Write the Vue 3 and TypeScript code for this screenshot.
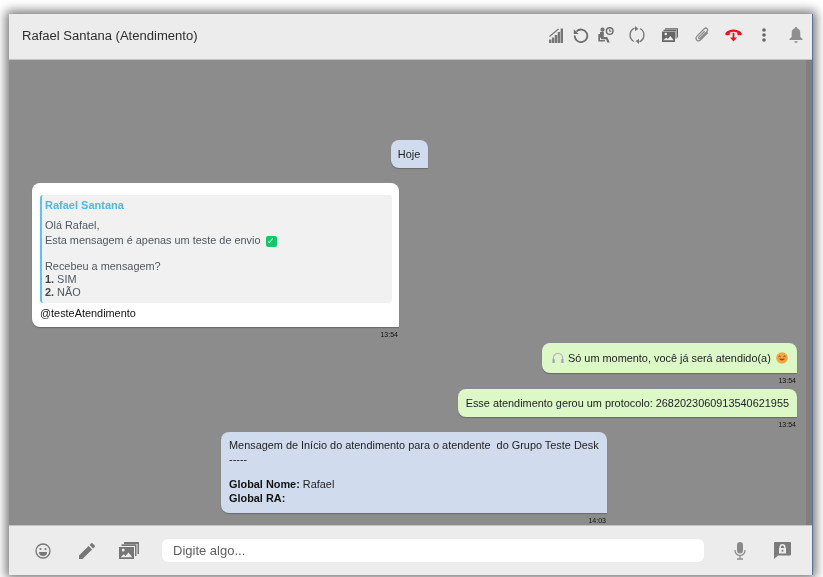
<script setup lang="ts">
const title = 'Rafael Santana (Atendimento)'
</script>

<template>
  <div class="page">
    <div class="chat-window">
      <header class="chat-header">
        <span class="chat-title">{{ title }}</span>
        <div class="header-icons">
          <svg class="ic" style="width:14px" viewBox="0 0 14 16"><path d="M0 12.500h2.400V16H0zM2.900 10.500h2.400V16H2.900zM5.800 8h2.400v8H5.800zM8.700 5h2.400v11H8.700zM11.600 1.500H14V16h-2.400z" fill="#777"/><path d="M0.500 9.500 9.500 2" stroke="#777" stroke-width="1.200" fill="none"/></svg>
          <svg class="ic ic-reload" viewBox="0 0 16 16"><path d="M3.400 4.500A6.300 6.300 0 1 1 1.700 8.500" fill="none" stroke="#6d6d6d" stroke-width="1.800"/><path d="M0.800 2.200v4.800h4.800z" fill="#6d6d6d"/></svg>
          <svg class="ic ic-wait" viewBox="0 0 16 16"><circle cx="4.500" cy="2.700" r="2.100" fill="#707070"/><path d="M2 5h3.800v5H9.200l2.600 5.500H9.300L8 12.300H3.500L2 10z M0.300 7v7.500h6.500v-1.500H2V7z" fill="#707070"/><circle cx="11.700" cy="4" r="3.300" fill="none" stroke="#707070" stroke-width="1.500"/><path d="M11.700 2.300V4.200h1.700" fill="none" stroke="#707070" stroke-width="1.100"/></svg>
          <svg class="ic ic-sync" viewBox="0 0 18 18"><path d="M6.500 2.200A7.500 7.500 0 0 0 5.800 15.500M11.500 15.800A7.500 7.500 0 0 0 12.200 2.500" fill="none" stroke="#777" stroke-width="1.400"/><path d="M7 0 10.500 3 7 5zM11 18 7.500 15l3.500-2z" fill="#777"/></svg>
          <svg class="ic ic-gallery" viewBox="0 0 16 15"><path d="M3 2V0.800h13V10h-1V2z" fill="#666"/><path d="M1.500 3.500V2.300h13v9h-1v-7.800z" fill="#666"/><path d="M0 4h13v10.500H0zM1.300 12.800h10.400L8.300 8.500l-2.500 3-1.500-1.500zM3.800 7.800a1.300 1.300 0 1 0 0-2.600 1.300 1.300 0 0 0 0 2.600z" fill="#666" fill-rule="evenodd"/></svg>
          <svg class="ic ic-clip" viewBox="0 0 16 16"><path d="M13.800 5.500 6.600 12.700c-1.200 1.200-2.900 1.300-3.900.3-1-1-.9-2.700.3-3.900l7.300-7.300c.8-.8 2-.9 2.800-.1.800.8.700 2-.1 2.800l-6.700 6.700c-.4.400-1 .5-1.400.1-.4-.4-.3-1 .1-1.400l5.700-5.700" fill="none" stroke="#8a8a8a" stroke-width="1.300"/></svg>
          <svg class="ic ic-hangup" viewBox="0 0 17 16"><path d="M0.300 6.200C2.200 3.700 5 2.500 8.500 2.500s6.300 1.200 8.200 3.700l-.4 2h-3.700l-.5-2.700c-1.200-.5-2.400-.7-3.600-.7s-2.400.2-3.600.7L4.400 8.200H.7z" fill="#f0101c"/><path d="M8.500 5.800v6" stroke="#f0101c" stroke-width="1.800"/><path d="M5 10.500h7L8.500 14.500z" fill="#f0101c"/></svg>
          <svg class="ic ic-dots" viewBox="0 0 4 14"><circle cx="2" cy="2" r="1.800" fill="#666"/><circle cx="2" cy="7" r="1.800" fill="#666"/><circle cx="2" cy="12" r="1.800" fill="#666"/></svg>
          <svg class="ic ic-bell" viewBox="0 0 14 16"><path d="M7 0c.8 0 1.200.6 1.200 1.300 2 .6 3.100 2.300 3.100 4.600v4l2.200 2.100v1H.500v-1l2.200-2.100v-4c0-2.300 1.100-4 3.100-4.600C5.800.6 6.200 0 7 0zM5.300 14.200h3.400c0 .9-.8 1.700-1.700 1.700s-1.700-.8-1.700-1.700z" fill="#8f8f8f"/></svg>
        </div>
      </header>

      <main class="chat-body">
        <div class="scroll-track"></div>
        <div class="day-row"><div class="bubble day">Hoje</div></div>

        <div class="msg left">
          <div class="bubble white">
            <div class="quote">
              <div class="quote-name">Rafael Santana</div>
              <div class="quote-text">
                <p>Olá Rafael,</p>
                <p>Esta mensagem é apenas um teste de envio <span class="check">✓</span></p>
                <p class="gap">Recebeu a mensagem?</p>
                <p><b>1.</b> SIM</p>
                <p><b>2.</b> NÃO</p>
              </div>
            </div>
            <div class="mention">@testeAtendimento</div>
          </div>
          <div class="time">13:54</div>
        </div>

        <div class="msg right">
          <div class="bubble green first">
            <svg class="phones" viewBox="0 0 13 13"><path d="M1.500 9V6.500a5 5 0 0 1 10 0V9" fill="none" stroke="#b9b2c4" stroke-width="1.300"/><rect x="0.500" y="7.500" width="2.500" height="4.500" rx="1" fill="#a79fb8"/><rect x="10" y="7.500" width="2.500" height="4.500" rx="1" fill="#a79fb8"/></svg>
            <span>Só um momento, você já será atendido(a)</span>
            <svg class="smile" viewBox="0 0 12 12"><circle cx="6" cy="6" r="5.800" fill="#f5a53a"/><path d="M2.500 4.800q1-1.500 2 0M7.500 4.800q1-1.500 2 0" fill="none" stroke="#7a3b10" stroke-width="1"/><path d="M2.800 6.800q3.200 3.600 6.400 0z" fill="#a8391f"/></svg>
          </div>
          <div class="time">13:54</div>
        </div>

        <div class="msg right">
          <div class="bubble green">Esse atendimento gerou um protocolo: 2682023060913540621955</div>
          <div class="time">13:54</div>
        </div>

        <div class="msg center">
          <div class="bubble blue">
            <p>Mensagem de Início do atendimento para o atendente&nbsp; do Grupo Teste Desk</p>
            <p>-----</p>
            <p class="gap"><b>Global Nome:</b> Rafael</p>
            <p><b>Global RA:</b></p>
          </div>
          <div class="time">14:03</div>
        </div>
      </main>

      <footer class="chat-footer">
        <svg class="f-ic f-smile" viewBox="0 0 16 16"><circle cx="8" cy="8" r="7" fill="none" stroke="#777" stroke-width="1.300"/><circle cx="5.500" cy="6" r="1.100" fill="#777"/><circle cx="10.500" cy="6" r="1.100" fill="#777"/><path d="M4 9h8a4 4 0 0 1-8 0z" fill="#777"/></svg>
        <svg class="f-ic f-pen" viewBox="0 0 16 16"><path d="M0 16v-3.500L9.600 2.900l3.500 3.500L3.500 16zM10.600 1.900 12.300.2c.3-.3.800-.3 1.100 0l2.400 2.400c.3.300.3.800 0 1.100l-1.700 1.700z" fill="#777"/></svg>
        <svg class="f-ic f-gallery" viewBox="0 0 20 17"><path d="M5 2V0h15v12h-1.500V2z" fill="#767676"/><path d="M2.500 4V2.200h15V14H16V4z" fill="#767676"/><path d="M0 5h15v12H0zM1.700 15.200h11.600L9.500 10.500l-3 3.500-1.800-1.800zM4.200 9.500a1.500 1.500 0 1 0 0-3 1.500 1.500 0 0 0 0 3z" fill="#767676" fill-rule="evenodd"/></svg>
        <input class="msg-input" type="text" placeholder="Digite algo..." />
        <svg class="f-ic f-mic" viewBox="0 0 12 18"><rect x="3" y="0" width="6" height="11.500" rx="3" fill="#8a8a8a"/><path d="M1 8v.5a5 5 0 0 0 10 0V8" fill="none" stroke="#8a8a8a" stroke-width="1.200"/><path d="M6 13.500V16M3 17h6" stroke="#8a8a8a" stroke-width="1.300"/></svg>
        <svg class="f-ic f-lock" viewBox="0 0 17 17"><path d="M1 0h15a1 1 0 0 1 1 1v11.500a1 1 0 0 1-1 1H4L0 17V1a1 1 0 0 1 1-1z" fill="#7b7b7b"/><path d="M5.500 6V5a3 3 0 0 1 6 0v1h.5v5.500H5V6zM7 6h3V5a1.500 1.500 0 0 0-3 0z" fill="#ececec" fill-rule="evenodd"/><circle cx="8.500" cy="8.700" r="1" fill="#7b7b7b"/></svg>
      </footer>
    </div>
  </div>
</template>

<style>
html, body { margin: 0; height: 100%; overflow: hidden; background: #fff; }
</style>

<style scoped>
.page {
  width: 823px;
  height: 577px;
  padding: 14px 10px 2px 9px;
  box-sizing: border-box;
  background: #fff;
  font-family: "Liberation Sans", Arial, sans-serif;
}
.chat-window {
  height: 100%;
  display: flex;
  flex-direction: column;
  box-shadow: 0 0 10px 3px rgba(0, 0, 0, .55);
  border-right: 1px solid #5a6f9a;
  box-sizing: border-box;
  filter: blur(.25px);
}
.chat-header {
  height: 46px;
  flex: none;
  display: flex;
  align-items: center;
  justify-content: space-between;
  padding: 0 9px 3px 13px;
  box-sizing: border-box;
  background: #ececec;
  border-bottom: 1px solid #c4c4c4;
}
.chat-title { font-size: 13.050px; color: #2e2e2e; }
.header-icons { display: flex; align-items: center; }
.ic { display: block; width: 16px; height: 16px; flex: none; }
.ic-reload { margin-left: 10px; }
.ic-wait { margin-left: 9px; }
.ic-sync { margin-left: 14px; width: 18px; height: 18px; }
.ic-gallery { margin-left: 16px; }
.ic-clip { margin-left: 16px; }
.ic-hangup { margin-left: 15px; width: 17px; }
.ic-dots { margin-left: 20px; width: 4px; height: 14px; }
.ic-bell { margin-left: 23px; width: 14px; }

.chat-body {
  position: relative;
  flex: 1;
  min-height: 0;
  overflow: hidden;
  background: #8c8c8c;
  padding: 80px 15px 0 23px;
  display: flex;
  flex-direction: column;
}
.scroll-track {
  position: absolute;
  top: 0;
  right: 0;
  bottom: 0;
  width: 6px;
  background: #7f7f7f;
}
.day-row { display: flex; justify-content: center; margin-bottom: 15px; padding-right: 11px; }
.bubble {
  font-size: 10.900px;
  line-height: 14px;
  color: #222;
  box-shadow: 0 1px 1px rgba(0, 0, 0, .25);
}
.bubble p { margin: 0; }
.day {
  width: 37px;
  height: 28px;
  box-sizing: border-box;
  background: #d0dcee;
  border-radius: 8px 8px 0 8px;
  text-align: center;
  line-height: 28px;
}
.msg { display: flex; flex-direction: column; }
.left { align-items: flex-start; width: 367px; }
.right { align-items: flex-end; }
.center { align-self: flex-start; margin: -1px 0 0 189px; width: 386px; }
.time {
  align-self: flex-end;
  height: 16px;
  font-size: 7px;
  line-height: 16px;
  color: #111;
  padding-right: 1px;
}
.white {
  width: 367px;
  height: 144px;
  box-sizing: border-box;
  background: #fff;
  border-radius: 8px 8px 0 8px;
  padding: 12px 7px 0 8px;
}
.quote {
  height: 108px;
  box-sizing: border-box;
  background: #f1f1f1;
  border-left: 2px solid #5cc1f5;
  border-radius: 3px;
  padding: 3px 3px;
}
.quote-name { font-size: 11px; line-height: 14px; font-weight: 700; color: #4cb9ea; }
.quote-text { margin-top: 7px; color: #50575d; line-height: 13px; }
.quote-text p:nth-child(2) { line-height: 16px; }
.quote-text b { color: #444; }
.gap { margin-top: 12px !important; }
.check {
  display: inline-block;
  width: 11px;
  height: 11px;
  border-radius: 2px;
  margin-left: 2px;
  background: #12c969;
  color: #fff;
  font-size: 9px;
  line-height: 11px;
  text-align: center;
  vertical-align: 0;
}
.mention { margin-top: 3px; color: #111; line-height: 14px; }
.green {
  background: #dbf8c6;
  border-radius: 8px 8px 0 8px;
  padding: 7px 8px;
  color: #222;
}
.first {
  display: flex;
  align-items: center;
  width: 255px;
  height: 30px;
  box-sizing: border-box;
  padding: 0 9px 0 10px;
  white-space: nowrap;
}
.phones { width: 12px; height: 12px; margin-right: 4px; flex: none; }
.smile { width: 12px; height: 12px; margin-left: 5px; flex: none; }
.blue {
  height: 81px;
  box-sizing: border-box;
  background: #d0dcee;
  border-radius: 8px 8px 0 8px;
  padding: 7px 8px;
  color: #222;
  line-height: 13.500px;
  white-space: nowrap;
}
.blue b { color: #111; }

.chat-footer {
  height: 50px;
  flex: none;
  display: flex;
  align-items: center;
  background: #ececec;
  border-top: 1px solid #c4c4c4;
  box-sizing: border-box;
  padding-left: 26px;
}
.f-ic { display: block; flex: none; }
.f-smile { width: 16px; height: 16px; }
.f-pen { width: 16px; height: 16px; margin-left: 28px; }
.f-gallery { width: 20px; height: 17px; margin-left: 24px; }
.msg-input {
  width: 542px;
  height: 23px;
  box-sizing: border-box;
  margin-left: 23px;
  border: none;
  outline: none;
  border-radius: 6px;
  background: #fff;
  padding: 0 11px;
  font: 13px "Liberation Sans", Arial, sans-serif;
  color: #555;
}
.msg-input::placeholder { color: #5f5f5f; opacity: 1; }
.f-mic { width: 12px; height: 18px; margin-left: 30px; }
.f-lock { width: 17px; height: 17px; margin-left: 28px; }
</style>
